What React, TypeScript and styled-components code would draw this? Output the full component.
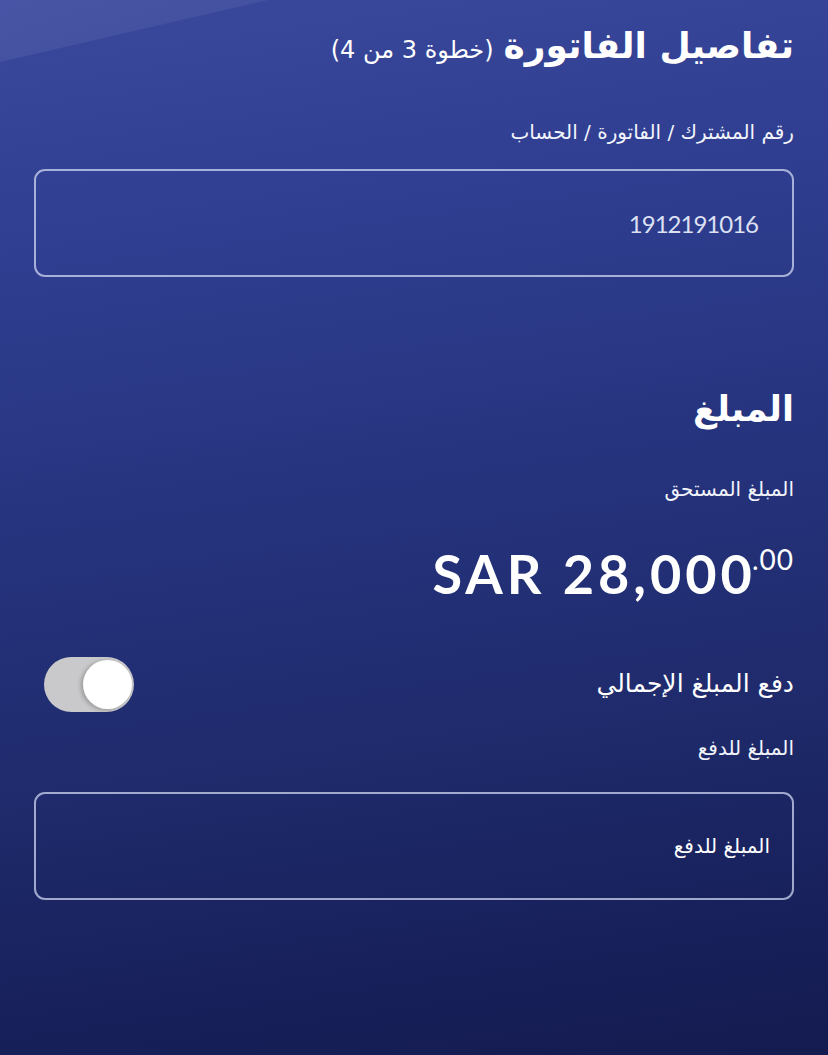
import React from "react"
import styled, { createGlobalStyle } from "styled-components"

const GlobalStyle = createGlobalStyle`
  html, body {
    margin: 0;
    padding: 0;
    background: #141c50;
  }
  * {
    box-sizing: border-box;
  }
`

const App: React.FC = () => (
  <>
    <GlobalStyle />
    <Screen dir="rtl">
      <TitleRow>
        <Title>تفاصيل الفاتورة</Title>
        <Step>(خطوة 3 من 4)</Step>
      </TitleRow>

      <Label $top={48}>رقم المشترك / الفاتورة / الحساب</Label>
      <Field $top={23} $pad={34}>
        <FieldValue $latin>1912191016</FieldValue>
      </Field>

      <SectionHeading>المبلغ</SectionHeading>
      <Label $top={42}>المبلغ المستحق</Label>
      <Amount dir="ltr">
        SAR 28,000<Cents>.00</Cents>
      </Amount>

      <ToggleRow>
        <ToggleLabel>دفع المبلغ الإجمالي</ToggleLabel>
        <Toggle aria-checked="true" role="switch">
          <Knob />
        </Toggle>
      </ToggleRow>

      <Label $top={22}>المبلغ للدفع</Label>
      <Field $top={30} $pad={22}>
        <FieldValue>المبلغ للدفع</FieldValue>
      </Field>
    </Screen>
  </>
)
export default App

const arabic = `"DejaVu Sans", "Noto Sans", sans-serif`
const latin = `"Lato", "DejaVu Sans", sans-serif`

const Screen = styled.main`
  position: relative;
  overflow: hidden;
  min-height: 1055px;
  padding: 22px 34px 40px;
  display: flex;
  flex-direction: column;
  color: #ffffff;
  font-family: ${arabic};
  background: linear-gradient(
    172deg,
    #3a499c 0%,
    #2f3e90 22%,
    #26347f 45%,
    #1f2b6c 68%,
    #17205a 88%,
    #131b4f 100%
  );

  &::before {
    content: "";
    position: absolute;
    top: 0;
    left: 0;
    width: 300px;
    height: 70px;
    background: linear-gradient(160deg, #4a56a6, #43509f);
    clip-path: polygon(0 0, 268px 0, 0 62px);
    opacity: 0.85;
    pointer-events: none;
  }

  & > * {
    position: relative;
  }
`

const TitleRow = styled.header`
  display: flex;
  align-items: baseline;
  gap: 10px;
  height: 48px;
`

const Title = styled.h1`
  margin: 0;
  font-size: 36px;
  font-weight: 700;
  line-height: 48px;
`

const Step = styled.span`
  font-size: 24px;
  font-weight: 400;
`

const Label = styled.div<{ $top: number }>`
  margin-top: ${(p) => p.$top}px;
  font-size: 20px;
  line-height: 28px;
  color: #f2f4fb;
`

const Field = styled.div<{ $top: number; $pad: number }>`
  margin-top: ${(p) => p.$top}px;
  height: 108px;
  border: 2px solid rgba(214, 220, 245, 0.72);
  border-radius: 11px;
  display: flex;
  align-items: center;
  padding: 0 ${(p) => p.$pad}px;
`

const FieldValue = styled.span<{ $latin?: boolean }>`
  font-family: ${(p) => (p.$latin ? latin : arabic)};
  font-size: ${(p) => (p.$latin ? 24 : 20)}px;
  letter-spacing: ${(p) => (p.$latin ? -1 : 0)}px;
  color: ${(p) => (p.$latin ? "#dde1f3" : "#ffffff")};
`

const SectionHeading = styled.h2`
  margin: 108px 0 0;
  font-size: 35px;
  font-weight: 700;
  line-height: 48px;
`

const Amount = styled.div`
  margin-top: 41px;
  align-self: flex-start;
  display: flex;
  align-items: flex-start;
  font-family: ${latin};
  font-size: 54px;
  font-weight: 700;
  line-height: 60px;
  letter-spacing: 4px;
`

const Cents = styled.span`
  font-size: 28px;
  font-weight: 400;
  line-height: 30px;
  letter-spacing: 1px;
  margin-left: -4px;
`

const ToggleRow = styled.div`
  margin-top: 52px;
  display: flex;
  align-items: center;
  justify-content: space-between;
  height: 56px;
`

const ToggleLabel = styled.span`
  font-size: 25px;
  line-height: 32px;
`

const Toggle = styled.div`
  width: 90px;
  height: 55px;
  margin-left: 10px;
  border-radius: 28px;
  background: #c9c9cb;
  display: flex;
  align-items: center;
  justify-content: flex-end;
  padding: 0 2px;
  direction: ltr;
`

const Knob = styled.span`
  width: 49px;
  height: 49px;
  border-radius: 50%;
  background: #ffffff;
  box-shadow: -2px 1px 4px rgba(0, 0, 0, 0.25);
`
